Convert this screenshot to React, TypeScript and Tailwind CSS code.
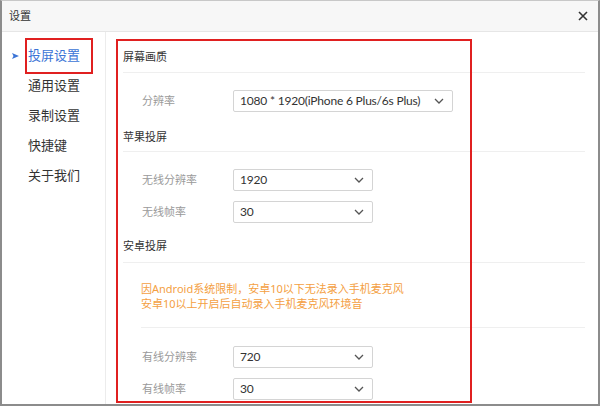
import React from 'react';

const font = { fontFamily: '"Noto Sans", "Noto Sans CJK SC", sans-serif' };

function Chevron() {
  return (
    <svg width="10" height="6" viewBox="0 0 10 6" className="text-[#555] shrink-0">
      <path d="M1 1l4 4 4-4" fill="none" stroke="currentColor" strokeWidth="1.3" />
    </svg>
  );
}

function Select({ value, wide = false }: { value: string; wide?: boolean }) {
  return (
    <div
      className={`flex items-center justify-between h-[22px] border border-[#d4d4d4] rounded-[2px] bg-white pl-[6px] pr-[8px] text-[12px] text-[#333] whitespace-nowrap ${
        wide ? 'w-[220px]' : 'w-[140px]'
      }`}
    >
      <span className="tracking-[-0.2px]" style={{ fontFamily: '"Lato", "Noto Sans CJK SC", sans-serif' }}>
        {value}
      </span>
      <Chevron />
    </div>
  );
}

function Field({ label, value, wide = false }: { label: string; value: string; wide?: boolean }) {
  return (
    <div className="flex items-center pl-[19px]">
      <span className="w-[91px] text-[11px] text-[#9a9a9a]">{label}</span>
      <Select value={value} wide={wide} />
    </div>
  );
}

export default function App() {
  const menu = ['投屏设置', '通用设置', '录制设置', '快捷键', '关于我们'];

  return (
    <div
      style={font}
      className="relative w-[600px] h-[406px] bg-white border-t border-t-[#c8c8c8] border-l-2 border-r-2 border-b-2 border-[#8c8c8c] flex flex-col overflow-hidden"
    >
      {/* Title bar */}
      <div className="h-[31px] shrink-0 flex items-center justify-between pl-[7px] pr-[10px] bg-[#f7f7f7] border-b border-[#e6e6e6]">
        <span className="text-[11px] text-[#333]">设置</span>
        <svg width="10" height="10" viewBox="0 0 10 10" className="text-[#333]">
          <path d="M1 1l8 8M9 1l-8 8" stroke="currentColor" strokeWidth="1.6" />
        </svg>
      </div>

      <div className="flex flex-1 min-h-0">
        {/* Sidebar */}
        <div className="w-[104px] shrink-0 border-r border-[#ececec] pt-[9px] pl-[10px]">
          {menu.map((item, i) => (
            <div key={item} className="flex items-center h-[30px]">
              <span className="w-[16px] flex items-center">
                {i === 0 && (
                  <svg width="7" height="6" viewBox="0 0 7 6">
                    <path d="M0 0L7 3 0 6 1.5 3z" fill="#3b74d6" />
                  </svg>
                )}
              </span>
              <span className={`text-[13px] ${i === 0 ? 'text-[#3b74d6]' : 'text-[#333]'}`}>{item}</span>
            </div>
          ))}
        </div>

        {/* Main */}
        <div className="flex-1 pl-[17px] pr-[13px] pt-[17px] flex flex-col">
          <div className="text-[11px] leading-[16px] text-[#333]">屏幕画质</div>
          <div className="mt-[7px] border-t border-[#efefef]" />
          <div className="mt-[17px]">
            <Field label="分辨率" value="1080 * 1920(iPhone 6 Plus/6s Plus)" wide />
          </div>

          <div className="mt-[17px] text-[11px] leading-[16px] text-[#333]">苹果投屏</div>
          <div className="mt-[6px] border-t border-[#efefef]" />
          <div className="mt-[17px] flex flex-col gap-[10px]">
            <Field label="无线分辨率" value="1920" />
            <Field label="无线帧率" value="30" />
          </div>

          <div className="mt-[15px] text-[11px] leading-[16px] text-[#333]">安卓投屏</div>
          <div className="mt-[8px] border-t border-[#efefef]" />
          <div className="mt-[18px] pl-[18px] text-[11px] leading-[15px] text-[#f4a042]">
            <div>因Android系统限制，安卓10以下无法录入手机麦克风</div>
            <div>安卓10以上开启后自动录入手机麦克风环境音</div>
          </div>
          <div className="mt-[16px] ml-[18px] border-t border-[#efefef]" />
          <div className="mt-[18px] flex flex-col gap-[10px]">
            <Field label="有线分辨率" value="720" />
            <Field label="有线帧率" value="30" />
          </div>
        </div>
      </div>

      {/* Annotation boxes */}
      <div className="absolute left-[23px] top-[37px] w-[68px] h-[36px] border-2 border-[#e02020]" />
      <div className="absolute left-[114px] top-[38px] w-[356px] h-[364px] border-2 border-[#e02020]" />
    </div>
  );
}
